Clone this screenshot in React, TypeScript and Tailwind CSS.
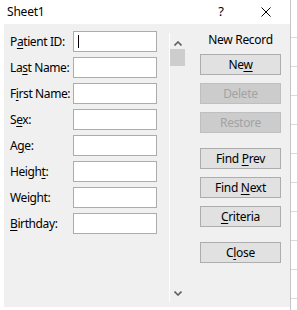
import React from "react";

const font = { fontFamily: '"Noto Sans", "Open Sans", sans-serif' };

function U({ children }: { children: React.ReactNode }) {
  return <span className="underline underline-offset-2">{children}</span>;
}

const fields: React.ReactNode[] = [
  <>P<U>a</U>tient ID:</>,
  <>La<U>s</U>t Name:</>,
  <>F<U>i</U>rst Name:</>,
  <>S<U>e</U>x:</>,
  <>A<U>g</U>e:</>,
  <>Heigh<U>t</U>:</>,
  <>Weight:</>,
  <><U>B</U>irthday:</>,
];

function Btn({ children, disabled, className = "" }: { children: React.ReactNode; disabled?: boolean; className?: string }) {
  return (
    <div
      className={
        "h-[21px] w-[81px] flex items-center justify-center text-[12px] tracking-[-0.3px] border whitespace-pre " +
        (disabled
          ? "bg-[#cccccc] border-[#bfbfbf] text-[#a3a3a3] "
          : "bg-[#e1e1e1] border-[#adadad] text-[#000] ") +
        className
      }
    >
      <span className="whitespace-pre">{children}</span>
    </div>
  );
}

export default function App() {
  return (
    <div className="w-[297px] h-[310px] bg-white flex overflow-hidden" style={font}>
      <div className="w-[290px] flex flex-col">
        <div className="h-[24px] flex items-center text-[12px] text-black">
          <span className="pl-[7px] tracking-[-0.2px]">Sheet1</span>
          <span className="ml-auto mr-[37px] text-[13px]">?</span>
          <svg width="10" height="10" viewBox="0 0 10 10" className="mr-[19px]">
            <path d="M0.5 0.5 L9.5 9.5 M9.5 0.5 L0.5 9.5" stroke="#000" strokeWidth="1" />
          </svg>
        </div>
        <div className="ml-[4px] h-[283px] bg-[#f0f0f0] flex">
          <div className="pt-[7px] pl-[6px] flex flex-col gap-[5px]">
            {fields.map((f, i) => (
              <div key={i} className="flex items-center h-[21px]">
                <div className="w-[63px] text-[12px] tracking-[-0.4px] text-black leading-none whitespace-nowrap">{f}</div>
                <div className="w-[84px] h-[21px] bg-white border border-[#acacac] flex items-center">
                  {i === 0 && <div className="ml-[4px] w-[1px] h-[13px] bg-black" />}
                </div>
              </div>
            ))}
          </div>
          <div className="ml-[12px] mt-[9px] h-[269px] w-[16px] border-l border-white flex flex-col items-center">
            <svg width="8" height="5" viewBox="0 0 8 5" className="mt-[8px]">
              <path d="M0.5 4.5 L4 1 L7.5 4.5" stroke="#606060" strokeWidth="1.6" fill="none" />
            </svg>
            <div className="mt-[3px] w-[15px] h-[17px] bg-[#cdcdcd]" />
            <svg width="8" height="5" viewBox="0 0 8 5" className="mt-auto mb-[6px]">
              <path d="M0.5 0.5 L4 4 L7.5 0.5" stroke="#606060" strokeWidth="1.6" fill="none" />
            </svg>
          </div>
          <div className="ml-[15px] pt-[8px] flex flex-col">
            <div className="h-[16px] text-[12px] tracking-[-0.3px] text-black text-center leading-[16px] whitespace-nowrap">New Record</div>
            <Btn className="mt-[6px]">Ne<U>w</U></Btn>
            <Btn disabled className="mt-[8px]">Delete</Btn>
            <Btn disabled className="mt-[8px]">Restore</Btn>
            <Btn className="mt-[15px]">{"Find "}<U>P</U>rev</Btn>
            <Btn className="mt-[8px]">{"Find "}<U>N</U>ext</Btn>
            <Btn className="mt-[8px]"><U>C</U>riteria</Btn>
            <Btn className="mt-[15px]">C<U>l</U>ose</Btn>
          </div>
        </div>
      </div>
      <div className="flex-1 border-l border-[#c6c6c6] flex flex-col">
        {[38, 67, 96, 125, 154, 183, 212, 241, 270, 299].map((y, i) => (
          <div key={i} className="h-[29px] border-b border-[#dadada] first:h-[38px]" />
        ))}
      </div>
    </div>
  );
}
